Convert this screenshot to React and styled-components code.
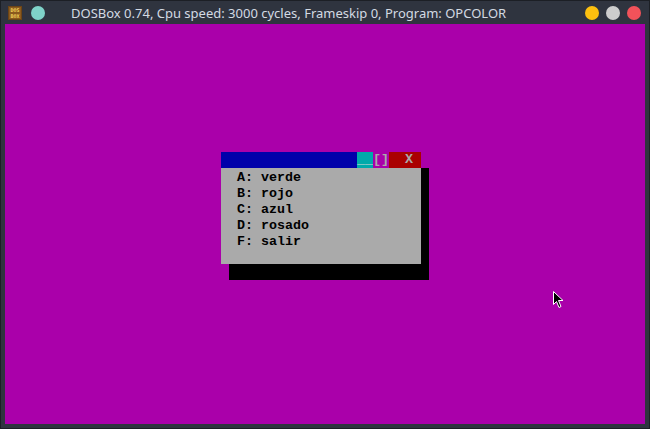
import React from "react";
import styled, { createGlobalStyle } from "styled-components";

const Global = createGlobalStyle`
  html, body { margin: 0; padding: 0; background: #2f343f; }
  body { width: 650px; height: 429px; overflow: hidden; }
`;

const items = [
  ["A", "verde"],
  ["B", "rojo"],
  ["C", "azul"],
  ["D", "rosado"],
  ["F", "salir"],
];

export default function App() {
  return (
    <>
      <Global />
      <Window>
        <TitleBar>
          <Left>
            <svg width="14" height="14" viewBox="0 0 14 14">
              <rect x="0" y="0" width="14" height="14" fill="#6b4416" />
              <rect x="1" y="1" width="12" height="12" fill="#8a5a1e" />
              <text x="7" y="6" fontSize="5" fontFamily="DejaVu Sans Mono" fontWeight="bold" fill="#f3d35a" textAnchor="middle">DOS</text>
              <text x="7" y="12" fontSize="5" fontFamily="DejaVu Sans Mono" fontWeight="bold" fill="#f3d35a" textAnchor="middle">BOX</text>
            </svg>
            <Dot color="#7fd3c9" />
          </Left>
          <Caption>DOSBox 0.74, Cpu speed: 3000 cycles, Frameskip 0, Program: OPCOLOR</Caption>
          <Controls>
            <Dot color="#fdc00f" />
            <Dot color="#cdcdcd" />
            <Dot color="#f2525a" />
          </Controls>
        </TitleBar>
        <Screen>
          <Dialog>
            <DialogBar>
              <Cell bg="#0000aa" grow />
              <Cell bg="#00aaaa" color="#d8d8d8">__</Cell>
              <Cell bg="#aa00aa" color="#aaaaaa">[]</Cell>
              <Cell bg="#aa0000" color="#aaaaaa">{"  X "}</Cell>
            </DialogBar>
            <DialogBody>
              {items.map(([k, v]) => (
                <Line key={k}>{`${k}: ${v}`}</Line>
              ))}
            </DialogBody>
          </Dialog>
          <Cursor width="12" height="18" viewBox="0 0 12 18">
            <path
              d="M0.5 0.5 L0.5 13.5 L3.5 10.5 L6 16.5 L8 15.5 L5.5 9.5 L10 9.5 Z"
              fill="#000"
              stroke="#fff"
              strokeWidth="1"
            />
          </Cursor>
        </Screen>
      </Window>
    </>
  );
}

const Window = styled.div`
  width: 650px;
  height: 429px;
  box-sizing: border-box;
  border: 1px solid #1c1f25;
  background: #2f343f;
  padding: 0 4px 4px 4px;
  display: flex;
  flex-direction: column;
`;

const TitleBar = styled.div`
  height: 23px;
  display: flex;
  align-items: center;
  font-family: "Noto Sans", sans-serif;
  font-size: 13px;
  color: #d3dae3;
`;

const Left = styled.div`
  display: flex;
  align-items: center;
  gap: 9px;
  padding-left: 3px;
`;

const Dot = styled.span`
  width: 14px;
  height: 14px;
  border-radius: 50%;
  background: ${(p) => p.color};
  display: inline-block;
`;

const Caption = styled.div`
  margin-left: 26px;
  flex: 1;
  white-space: nowrap;
`;

const Controls = styled.div`
  display: flex;
  gap: 7px;
  padding-right: 4px;
`;

const Screen = styled.div`
  position: relative;
  width: 640px;
  height: 400px;
  background: #aa00aa;
  padding: 128px 0 0 216px;
  box-sizing: border-box;
`;

const Dialog = styled.div`
  width: 200px;
  box-shadow: 8px 16px 0 #000;
  font-family: "Liberation Mono", monospace;
  font-weight: bold;
  font-size: 13.33px;
  line-height: 16px;
`;

const DialogBar = styled.div`
  display: flex;
  height: 16px;
`;

const Cell = styled.div`
  background: ${(p) => p.bg};
  color: ${(p) => p.color || "#aaaaaa"};
  flex: ${(p) => (p.grow ? 1 : "none")};
  white-space: pre;
  height: 16px;
`;

const DialogBody = styled.div`
  background: #aaaaaa;
  height: 96px;
  padding-left: 16px;
  color: #000;
`;

const Line = styled.div`
  height: 16px;
  padding-top: 2px;
  box-sizing: border-box;
  white-space: pre;
  line-height: 16px;
`;

const Cursor = styled.svg`
  position: absolute;
  left: 548px;
  top: 267px;
`;
